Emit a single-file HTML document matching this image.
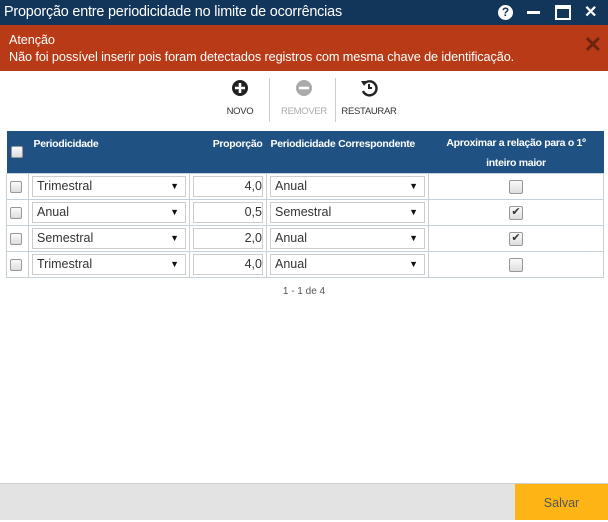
<!DOCTYPE html>
<html><head><meta charset="utf-8"><style>
*{box-sizing:border-box;margin:0;padding:0}
body{width:608px;height:520px;overflow:hidden;background:#fff;font-family:"Liberation Sans",sans-serif;position:relative}
.title{position:absolute;left:0;top:0;width:608px;height:25px;background:#12355a;color:#fff;font-size:14.4px;line-height:25px;padding-left:4px;letter-spacing:-0.2px}
.alert{position:absolute;left:0;top:25px;width:608px;height:46px;background:#b83a17;color:#fff;font-size:12.7px;padding:7px 0 0 9px;line-height:17px;letter-spacing:-0.1px}
.ax{position:absolute;right:6px;top:11px;color:#6b2410;font-size:22px;font-weight:bold}
.tb{position:absolute;top:79px;font-size:9.5px;color:#333;text-align:center;letter-spacing:-0.3px}
.sep{position:absolute;top:78px;width:1px;height:44px;background:#ccc}
table{position:absolute;left:6px;top:131px;width:598px;border-collapse:collapse;font-size:12px;table-layout:fixed}
th{background:#1f5283;color:#fff;font-size:10.5px;font-weight:bold;height:41px;vertical-align:top;padding-top:7px;text-align:left;white-space:nowrap;letter-spacing:-0.3px}
td{border:1px solid #c5d0d8;height:26px;padding:2px 3px;vertical-align:middle}
.sel{border:1px solid #ccc;height:21px;line-height:19px;padding-left:4px;font-size:12.5px;color:#333;position:relative}
.sel:after{content:"▼";position:absolute;right:6px;top:0;font-size:9px;color:#111}
.num{border:1px solid #ccc;height:21px;line-height:19px;text-align:right;font-size:12.5px;color:#333}
.cb{display:inline-block;width:12px;height:12px;border:1px solid #999;border-radius:2px;background:linear-gradient(#fafafa,#ddd);vertical-align:middle;font-size:11px;line-height:10px;text-align:center;color:#333}
.cb2{width:14px;height:14px}
.foot{position:absolute;left:0;top:483px;width:608px;height:37px;background:#e3e3e3;border-top:1px solid #d0d0d0}
.save{position:absolute;left:515px;top:484px;width:93px;height:36px;background:#fdb515;color:#555;font-size:12.5px;text-align:center;line-height:38px}
</style></head><body>
<div class="title">Proporção entre periodicidade no limite de ocorrências
<span style="position:absolute;left:498px;top:5px;width:15px;height:15px;border-radius:50%;background:#fff;color:#12355a;font-size:12px;font-weight:bold;line-height:15px;text-align:center">?</span>
<span style="position:absolute;left:527px;top:11px;width:13px;height:3px;background:#fff"></span>
<span style="position:absolute;left:555px;top:5px;width:16px;height:15px;border:2px solid #fff;border-top-width:4px"></span>
<span style="position:absolute;left:584px;top:0;font-size:16px;font-weight:bold">✕</span>
</div>
<div class="alert">Atenção<br>Não foi possível inserir pois foram detectados registros com mesma chave de identificação.<span class="ax">✕</span></div>
<div class="tb" style="left:222px;width:36px"><svg width="18" height="18" viewBox="0 0 18 18"><circle cx="9" cy="9" r="8" fill="#222"/><path d="M9 4v10M4 9h10" stroke="#fff" stroke-width="2.6"/></svg><div style="margin-top:6px">NOVO</div></div>
<div class="sep" style="left:269px"></div>
<div class="tb" style="left:278px;width:52px;color:#aaa"><svg width="18" height="18" viewBox="0 0 18 18"><circle cx="9" cy="9" r="8" fill="#aaa"/><path d="M4 9h10" stroke="#fff" stroke-width="2.6"/></svg><div style="margin-top:6px">REMOVER</div></div>
<div class="sep" style="left:335px"></div>
<div class="tb" style="left:341px;width:56px"><svg width="18" height="18" viewBox="0 0 18 18"><path d="M4 5A7 7 0 1 1 3 12" fill="none" stroke="#222" stroke-width="2.4"/><path d="M1 2l6 0-3 5z" fill="#222"/><path d="M9 5v4h3" fill="none" stroke="#222" stroke-width="2"/></svg><div style="margin-top:6px">RESTAURAR</div></div>
<table>
<colgroup><col style="width:22px"><col style="width:161px"><col style="width:77px"><col style="width:162px"><col></colgroup>
<tr><th style="padding-left:4px;vertical-align:middle;padding-top:0"><span class="cb"></span></th><th style="padding-left:5px">Periodicidade</th><th style="text-align:right;padding-right:4px">Proporção</th><th style="padding-left:4px">Periodicidade Correspondente</th><th style="text-align:center;line-height:20px;padding-top:2px;white-space:normal">Aproximar a relação para o 1º<br>inteiro maior</th></tr>
<tr><td><span class="cb"></span></td><td><div class="sel">Trimestral</div></td><td><div class="num">4,0</div></td><td><div class="sel">Anual</div></td><td style="text-align:center"><span class="cb cb2"></span></td></tr>
<tr><td><span class="cb"></span></td><td><div class="sel">Anual</div></td><td><div class="num">0,5</div></td><td><div class="sel">Semestral</div></td><td style="text-align:center"><span class="cb cb2">✔</span></td></tr>
<tr><td><span class="cb"></span></td><td><div class="sel">Semestral</div></td><td><div class="num">2,0</div></td><td><div class="sel">Anual</div></td><td style="text-align:center"><span class="cb cb2">✔</span></td></tr>
<tr><td><span class="cb"></span></td><td><div class="sel">Trimestral</div></td><td><div class="num">4,0</div></td><td><div class="sel">Anual</div></td><td style="text-align:center"><span class="cb cb2"></span></td></tr>
</table>
<div style="position:absolute;left:0;width:608px;top:286px;text-align:center;font-size:10px;color:#555">1 - 1 de 4</div>
<div class="foot"></div>
<div class="save">Salvar</div>
</body></html>
